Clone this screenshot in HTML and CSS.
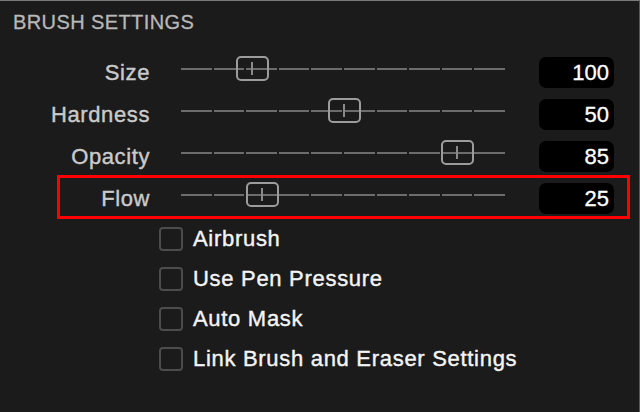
FILE: index.html
```html
<!DOCTYPE html>
<html>
<head>
<meta charset="utf-8">
<link rel="stylesheet" href="styles.css">
</head>
<body>
<div class="panel">
  <div class="title">BRUSH SETTINGS</div>
  <div class="rows">
    <div class="row">
      <div class="label">Size</div>
      <div class="slider"><div class="track"></div><div class="thumb" style="left:71px"></div></div>
      <div class="value">100</div>
    </div>
    <div class="row">
      <div class="label">Hardness</div>
      <div class="slider"><div class="track"></div><div class="thumb" style="left:163px"></div></div>
      <div class="value">50</div>
    </div>
    <div class="row">
      <div class="label">Opacity</div>
      <div class="slider"><div class="track"></div><div class="thumb" style="left:276px"></div></div>
      <div class="value">85</div>
    </div>
    <div class="row highlight">
      <div class="label">Flow</div>
      <div class="slider"><div class="track"></div><div class="thumb" style="left:81px"></div></div>
      <div class="value">25</div>
    </div>
  </div>
  <div class="checks">
    <label class="check"><span class="box"></span><span class="ctext">Airbrush</span></label>
    <label class="check"><span class="box"></span><span class="ctext">Use Pen Pressure</span></label>
    <label class="check"><span class="box"></span><span class="ctext">Auto Mask</span></label>
    <label class="check"><span class="box"></span><span class="ctext">Link Brush and Eraser Settings</span></label>
  </div>
</div>
</body>
</html>
```

FILE: styles.css
```css
html, body {
  margin: 0;
  padding: 0;
  background: #1b1b1b;
}
.panel {
  width: 639px;
  height: 411px;
  border-top: 1px solid #7a7a7a;
  border-right: 1px solid #5a5a4a;
  background: #1b1b1b;
  font-family: "Liberation Sans", Arial, sans-serif;
  box-sizing: content-box;
}
.title {
  margin: 9px 0 0 13px;
  font-size: 20px;
  line-height: 24px;
  letter-spacing: 0.4px;
  color: #b8b8b8;
  -webkit-text-stroke: 0.3px #b8b8b8;
}
.rows {
  margin: 23px 0 0 20px;
  width: 607px;
  display: flex;
  flex-direction: column;
  gap: 11px;
}
.row {
  position: relative;
  height: 31px;
  display: flex;
  align-items: center;
}
.label {
  width: 130px;
  text-align: right;
  font-size: 22px;
  letter-spacing: 0.6px;
  margin-right: 31px;
  color: #cacaca;
  -webkit-text-stroke: 0.4px #cacaca;
}
.slider {
  position: relative;
  width: 326px;
  height: 25px;
  margin-right: 32px;
  margin-top: -8px;
}
.track {
  position: absolute;
  left: 0;
  right: 0;
  top: 12px;
  height: 2px;
  background: repeating-linear-gradient(to right, #6c6c6c 0, #6c6c6c 30.6px, transparent 30.6px, transparent 32.6px);
}
.thumb {
  position: absolute;
  top: 0;
  width: 33px;
  height: 25px;
  margin-left: -16.5px;
  box-sizing: border-box;
  border: 2px solid #9c9c9c;
  border-radius: 5px;
}
.thumb::after {
  content: "";
  position: absolute;
  left: 13.5px;
  top: 4px;
  width: 2px;
  height: 13px;
  background: #8a8a8a;
}
.value {
  width: 75px;
  height: 31px;
  box-sizing: border-box;
  background: #000;
  border-radius: 7px;
  color: #fff;
  font-size: 22px;
  line-height: 31px;
  text-align: right;
  padding-right: 5px;
  -webkit-text-stroke: 0.3px #fff;
}
.highlight::after {
  content: "";
  position: absolute;
  left: 37px;
  right: -3px;
  top: -8px;
  bottom: -5px;
  border: 3px solid #ff0000;
}
.checks {
  margin: 13px 0 0 159px;
  display: flex;
  flex-direction: column;
  gap: 16px;
}
.check {
  display: flex;
  align-items: center;
  height: 24px;
}
.box {
  width: 24px;
  height: 24px;
  box-sizing: border-box;
  border: 2px solid #4c4c4c;
  border-radius: 4px;
  margin-right: 10px;
}
.ctext {
  font-size: 22px;
  letter-spacing: 0.7px;
  color: #f4f4f4;
  -webkit-text-stroke: 0.4px #f4f4f4;
}
```
